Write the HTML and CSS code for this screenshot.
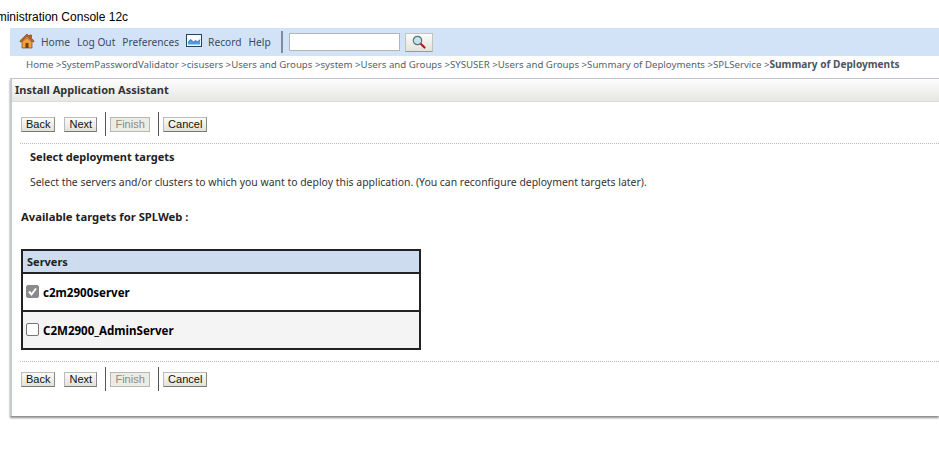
FILE: index.html
```html
<!DOCTYPE html>
<html lang="en">
<head>
<meta charset="utf-8">
<title>Administration Console 12c</title>
<link rel="stylesheet" href="styles.css">
</head>
<body>
<div class="title">Administration Console 12c</div>
<nav class="toolbar">
  <svg class="ico-home" width="16" height="16" viewBox="0 0 16 16"><path d="M8 1 .8 8l1 1.200L8 3.400l6.200 5.800 1-1.200L12.500 5.400V2h-2v1.500z" fill="#c8601a" stroke="#6b3a12" stroke-width=".6"/><path d="M3 9 8 4.600 13 9v6H3z" fill="#f2a03c" stroke="#7a4a1c" stroke-width=".7"/><rect x="6.500" y="10" width="3" height="5" fill="#7a3a10"/></svg>
  <a class="tool first">Home</a>
  <a class="tool">Log Out</a>
  <a class="tool">Preferences</a>
  <svg class="ico-rec" width="16" height="13" viewBox="0 0 16 13"><rect x=".5" y=".5" width="15" height="12" fill="#f7fafd" stroke="#23445f"/><path d="M2 10.500V8.500l2.500-3 3 2.500L10 6.500 11.500 8 14 5.500v5z" fill="#4a9cf0"/><path d="M2 8.500l2.500-3 3 2.500L10 6.500 11.500 8 14 5.500" fill="none" stroke="#1a5fae" stroke-width=".8"/></svg>
  <a class="tool first">Record</a>
  <a class="tool">Help</a>
  <span class="tool-sep"></span>
  <input class="search" type="text" aria-label="Search">
  <button class="search-btn" aria-label="Go"><svg width="14" height="14" viewBox="0 0 14 14"><path d="M8.500 8.500 12.500 12.500" stroke="#b01c1c" stroke-width="2.200" stroke-linecap="round"/><circle cx="5.500" cy="5.500" r="4.200" fill="#bfe6ee" stroke="#5c7478" stroke-width="1.200"/></svg></button>
</nav>
<div class="crumbs">Home &gt;SystemPasswordValidator &gt;cisusers &gt;Users and Groups &gt;system &gt;Users and Groups &gt;SYSUSER &gt;Users and Groups &gt;Summary of Deployments &gt;SPLService &gt;<b>Summary of Deployments</b></div>
<main class="panel">
  <h1 class="panel-head">Install Application Assistant</h1>
  <div class="actions top">
    <button class="btn">Back</button>
    <button class="btn next">Next</button>
    <span class="sep"></span>
    <button class="btn off" disabled>Finish</button>
    <span class="sep"></span>
    <button class="btn">Cancel</button>
  </div>
  <h2 class="sub">Select deployment targets</h2>
  <p class="intro">Select the servers and/or clusters to which you want to deploy this application. (You can reconfigure deployment targets later).</p>
  <h3 class="avail">Available targets for SPLWeb :</h3>
  <table class="targets">
    <thead><tr><th>Servers</th></tr></thead>
    <tbody>
      <tr><td><span class="cb on"><svg width="13" height="13" viewBox="0 0 13 13"><path d="M3 6.500 5.500 9.500 10 3.500" fill="none" stroke="#fff" stroke-width="2"/></svg></span>c2m2900server</td></tr>
      <tr class="alt"><td><span class="cb"></span>C2M2900_AdminServer</td></tr>
    </tbody>
  </table>
  <div class="actions bottom">
    <button class="btn">Back</button>
    <button class="btn next">Next</button>
    <span class="sep"></span>
    <button class="btn off" disabled>Finish</button>
    <span class="sep"></span>
    <button class="btn">Cancel</button>
  </div>
</main>
</body>
</html>
```
FILE: styles.css
```css
* { box-sizing: border-box; }
html, body { margin: 0; padding: 0; }
body { width: 939px; height: 459px; overflow: hidden; background: #fff; font-family: "Noto Sans", sans-serif; font-size: 11px; color: #333; }
.title { height: 28px; padding-top: 10px; margin-left: -18px; font: 12px/14px "Liberation Sans", sans-serif; color: #000; white-space: nowrap; }
.toolbar { height: 28px; margin-left: 10px; background: #d2e3f8; display: flex; align-items: center; padding-left: 9px; }
.tool { margin-left: 7px; font-size: 10.200px; color: #3c4a5c; white-space: nowrap; }
.tool.first { margin-left: 6px; }
.ico-home { margin-bottom: 3px; }
.ico-rec { margin-left: 7px; margin-bottom: 3px; }
.tool-sep { width: 2px; height: 22px; background: #7f8c99; margin-left: 10px; margin-right: 6px; }
.search { width: 111px; height: 18px; margin: 0; border: 1px solid #b5b5b5; background: #fff; padding: 0; }
.search-btn { width: 28px; height: 19px; margin: 0 0 0 5px; padding: 0; display: flex; align-items: center; justify-content: center; border: 1px solid #c4c4bc; border-bottom-color: #999; background: linear-gradient(#fbfbf8, #e3e3dc); }
.crumbs { height: 22px; padding: 1px 0 0 26px; font-size: 9.670px; line-height: 14px; color: #555f6b; white-space: nowrap; }
.crumbs b { font-size: 10.100px; color: #4c5560; }
.panel { margin-left: 10px; height: 338px; border-left: 2px solid #c4c9ce; border-top: 1px solid #c0c6cc; box-shadow: 0 2px 2px #8c8c8c; }
.panel-head { margin: 0; height: 23px; padding: 0 3px; font-size: 11px; line-height: 21px; font-weight: 700; color: #333; background: linear-gradient(#fdfdfd, #e6e7e5); border-bottom: 1px solid #dcdcda; }
.actions { display: flex; align-items: center; margin-left: 8px; padding-left: 1px; height: 24px; }
.actions.top { margin-top: 10px; }
.btn { height: 15px; margin: 0; padding: 0 4px; font: 11px/13px "Liberation Sans", sans-serif; color: #111; background: linear-gradient(#fbfbf6, #e2e2d8); border: 1px solid #bbb; border-right-color: #888; border-bottom-color: #777; }
.btn.next { margin-left: 9px; }
.btn.off { width: 40px; color: #8c8c84; background: #ecece6; border-color: #b9b9b0; }
.sep { width: 1px; height: 24px; background: #555; margin: 0 4px 0 8px; }
.sub { margin: 7px 0 0 8px; padding: 6px 0 0 10px; border-top: 1px dotted #bbb; height: 27px; font-size: 11px; line-height: 14px; font-weight: 700; color: #222; }
.intro { margin: 0 0 0 18px; height: 27px; padding-top: 5px; font-size: 10.430px; line-height: 14px; color: #333; white-space: nowrap; }
.avail { margin: 0 0 0 9px; height: 52px; padding-top: 13px; font-size: 11.250px; line-height: 14px; font-weight: 700; color: #222; }
.targets { margin-left: 9px; width: 400px; border-collapse: collapse; border: 2px solid #222; table-layout: fixed; }
.targets th { height: 23px; padding: 0 4px; text-align: left; font-size: 11px; font-weight: 700; color: #222; background: #cddcef; border-bottom: 2px solid #222; }
.targets td { height: 38px; padding: 0 3px; font-size: 11.550px; font-weight: 700; color: #000; border-bottom: 2px solid #222; }
.targets .alt td { background: #f4f4f4; }
.cb { display: inline-block; width: 13px; height: 13px; margin-right: 4px; vertical-align: -1px; border: 1px solid #767676; border-radius: 2px; background: #fff; }
.cb.on { background: #8a8a8a; border-color: #8a8a8a; }
.cb.on svg { display: block; margin: -1px; }
.actions.bottom { border-top: 1px dotted #bbb; margin-top: 11px; padding-top: 4px; height: 31px; }
```
